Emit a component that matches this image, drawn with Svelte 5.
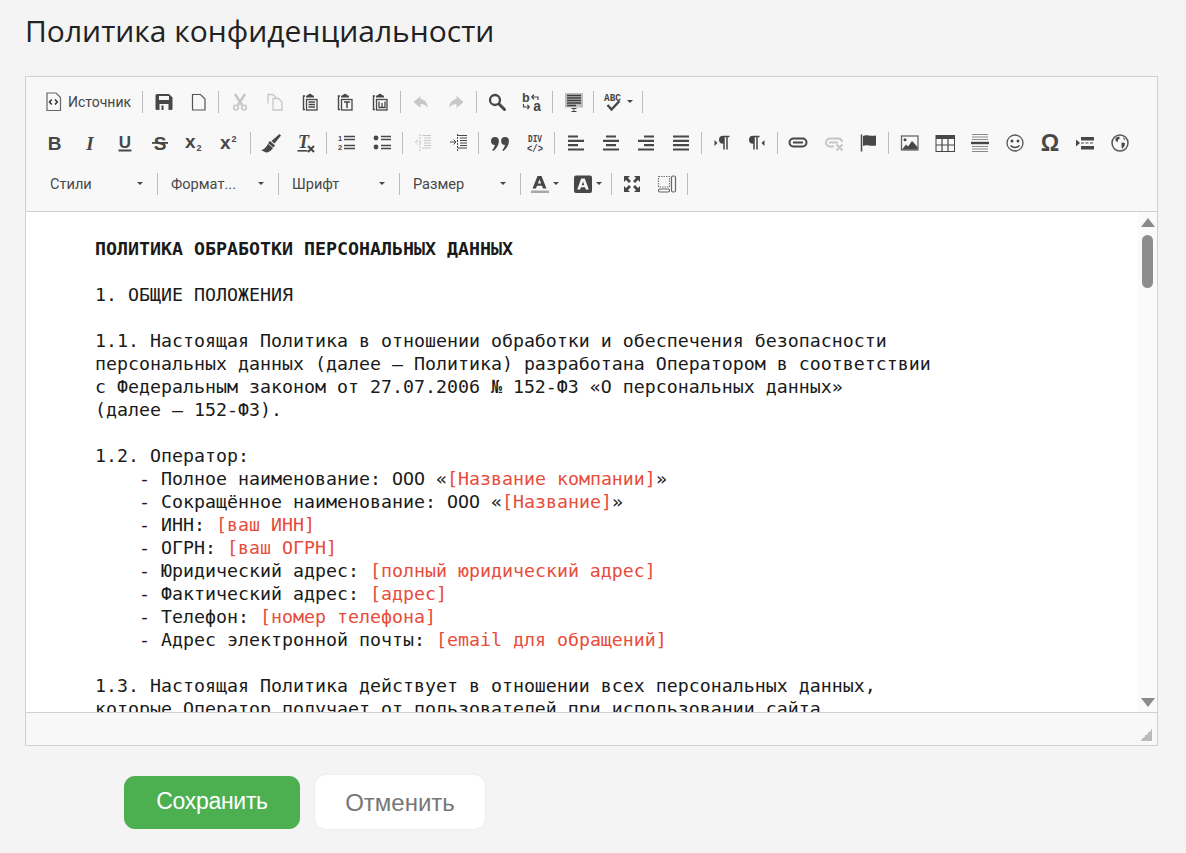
<script>
    // toolbar icons, 20x20 box. fill comes from the svg element
    const clip = '<path d="M5 4H3.500v13.500H5" fill="none" stroke="#474747" stroke-width="1.400"/><path d="M6 4.500q0-1.200 1.500-1.200h.5q0-1.500 2-1.500t2 1.500h.5q1.500 0 1.500 1.200v1H6z"/><rect x="6.500" y="7.500" width="10.500" height="10.500" fill="none" stroke="#474747" stroke-width="1.300"/>';
    const icons = {
        source: '<path d="M3 1h9l4.500 4.500V18.500H3z" fill="none" stroke="#666" stroke-width="1.200"/><path d="M7.800 7.500 5.500 10l2.300 2.500M11 7.500l2.300 2.500-2.300 2.500" fill="none" stroke="#333" stroke-width="1.500"/>',
        save: '<path d="M1.500 3.500q0-1.500 1.500-1.500h12l3.500 3.500v11q0 1.500-1.500 1.500h-14q-1.500 0-1.500-1.500z"/><rect x="5" y="4" width="10" height="4" fill="#f8f8f8"/><rect x="5.500" y="12" width="9" height="6" fill="#f8f8f8"/><rect x="7.500" y="13.500" width="2" height="4.500"/>',
        newpage: '<path d="M3.500 2.500h8l4.500 4.500v11H3.500z" fill="none" stroke="#555" stroke-width="1.200"/>',
        cut: '<path d="M5 2l7 11M15 2L8 13" fill="none" stroke="#474747" stroke-width="2.400"/><circle cx="6" cy="15.500" r="2.300" fill="none" stroke="#474747" stroke-width="1.600"/><circle cx="14" cy="15.500" r="2.300" fill="none" stroke="#474747" stroke-width="1.600"/>',
        copy: '<path d="M3 11.500V2.500h5l3 3M8 6.500h5.500l3.500 3.500v8H8z" fill="none" stroke="#474747" stroke-width="1.300"/>',
        paste: clip + '<path d="M8.500 10h6.500M8.500 12.500h6.500M8.500 15h6.500" stroke="#474747" stroke-width="1.300"/>',
        pastetext: clip + '<path d="M9 10h6M12 10v6" stroke="#474747" stroke-width="1.500"/>',
        pasteword: clip + '<path d="M9 9.500v6h6v-6M12 15v-4" fill="none" stroke="#474747" stroke-width="1.300"/>',
        undo: '<path d="M9.500 4 2.500 10l7 6v-4c3 0 5.500 1 7.500 4-.5-5-3-8.500-7.500-9z"/>',
        redo: '<path d="M10.500 4l7 6-7 6v-4c-3 0-5.500 1-7.500 4 .5-5 3-8.500 7.500-9z"/>',
        find: '<circle cx="8" cy="8" r="5" fill="none" stroke="#474747" stroke-width="2.300"/><path d="M12 12l5.500 5.500" stroke="#474747" stroke-width="3" stroke-linecap="round"/>',
        replace: '<text x="0" y="10" font-size="13" font-family="Liberation Mono" font-weight="700">b</text><text x="11" y="19" font-size="14" font-family="Liberation Mono" font-weight="700">a</text><path d="M9.500 5h6.500v3M9.500 5L12 2.800M9.500 5L12 7.200M1.500 12v3h6M7.500 15l-2.200-2.200M7.500 15l-2.200 2.200" fill="none" stroke="#474747" stroke-width="1.200"/>',
        selectall: '<rect x="1" y="1" width="18" height="14.500" fill="#bdbdbd"/><path d="M3 3.500h14M3 6h14M3 8.500h14M3 11h14M3 13.500h9" stroke="#3c3c3c" stroke-width="1.300"/><path d="M7.500 16.500h5M10 16.500v3M7.500 19.500h5" stroke="#474747" stroke-width="1"/>',
        spell: '<text x="0" y="9" font-size="11" font-family="Liberation Mono" font-weight="700" textLength="17" lengthAdjust="spacingAndGlyphs">ABC</text><path d="M3.500 13l4 4.500 8-8.500" fill="none" stroke="#474747" stroke-width="2.400"/>',
        bold: '<text x="9.500" y="16.500" text-anchor="middle" font-size="19" font-family="Liberation Sans" font-weight="700">B</text>',
        italic: '<text x="10" y="16.500" text-anchor="middle" font-size="19" font-family="Liberation Serif" font-style="italic" font-weight="700">I</text>',
        underline: '<text x="10" y="14.500" text-anchor="middle" font-size="17" font-family="Liberation Sans" font-weight="700">U</text><rect x="3.500" y="16.500" width="13" height="2"/>',
        strike: '<text x="10" y="16.500" text-anchor="middle" font-size="19" font-family="Liberation Sans" font-weight="700">S</text><rect x="2" y="9" width="16" height="1.800"/>',
        sub: '<text x="0" y="15" font-size="19" font-family="Liberation Sans" font-weight="700">x</text><text x="11.500" y="18" font-size="9" font-family="Liberation Sans" font-weight="700">2</text>',
        sup: '<text x="0" y="16" font-size="19" font-family="Liberation Sans" font-weight="700">x</text><text x="11.500" y="9" font-size="9" font-family="Liberation Sans" font-weight="700">2</text>',
        brush: '<path d="M18.500 1l1.500 1.500-6.500 8-3-2.500z"/><path d="M9 8l5 4.500-1.500 2L7 10z"/><path d="M7 10.800l5 4.200c-1.500 2.500-4.500 4.500-7 4.500L0 17c3 0 5.500-3 7-6.200z"/>',
        removeformat: '<text x="2" y="15" font-size="18" font-family="Liberation Serif" font-style="italic" font-weight="700">T</text><rect x="1.500" y="17" width="10" height="1.600"/><path d="M12 13l6 6M18 13l-6 6" stroke="#474747" stroke-width="2"/>',
        ol: '<text x="1" y="8" font-size="7.500" font-family="Liberation Sans" font-weight="700">1</text><text x="1" y="17" font-size="7.500" font-family="Liberation Sans" font-weight="700">2</text><path d="M7 3.500h11M7 6.500h11M7 12.500h11M7 15.500h11" stroke="#474747" stroke-width="1.400"/>',
        ul: '<circle cx="4" cy="5" r="2.400"/><circle cx="4" cy="14" r="2.400"/><path d="M9 3.500h10M9 6.500h10M9 12.500h10M9 15.500h10" stroke="#474747" stroke-width="1.400"/>',
        outdent: '<path d="M9 2.500h9M11 5h7M11 7.500h7M11 10h7M11 12.500h7M9 15h9" stroke="#474747" stroke-width="1.200"/><path d="M8 9H2M4.500 6.500 2 9l2.500 2.500M7 1v17" fill="none" stroke="#474747" stroke-width="1" stroke-dasharray="2 1"/>',
        indent: '<path d="M9 2.500h9M11 5h7M11 7.500h7M11 10h7M11 12.500h7M9 15h9" stroke="#474747" stroke-width="1.200"/><path d="M1 9h6M4.500 6.500 7 9l-2.500 2.500" fill="none" stroke="#474747" stroke-width="1"/><path d="M8.500 1v17" stroke="#474747" stroke-dasharray="2 1"/>',
        quote: '<path transform="translate(-1.200 -1) scale(1.120)" d="M2 8q0-3.500 3.500-3.500T9 8q0 5-5 9l-1-1q2-2 2.500-4.500Q2 11.500 2 8zM11 8q0-3.500 3.500-3.500T18 8q0 5-5 9l-1-1q2-2 2.500-4.500-3.500 0-3.500-3.500z"/>',
        div: '<text x="3" y="8.500" font-size="11" font-family="Liberation Mono" font-weight="700" textLength="14" lengthAdjust="spacingAndGlyphs">DIV</text><text x="2" y="19" font-size="11" font-family="Liberation Mono" font-weight="700" textLength="16" lengthAdjust="spacingAndGlyphs">&lt;/&gt;</text>',
        left: '<path d="M2 3.500h10M2 7.900h16M2 12.200h10M2 16.500h16" stroke="#474747" stroke-width="2.200"/>',
        center: '<path d="M5 3.500h10M2 7.900h16M5 12.200h10M2 16.500h16" stroke="#474747" stroke-width="2.200"/>',
        right: '<path d="M8 3.500h10M2 7.900h16M8 12.200h10M2 16.500h16" stroke="#474747" stroke-width="2.200"/>',
        justify: '<path d="M2 3.500h16M2 7.900h16M2 12.200h16M2 16.500h16" stroke="#474747" stroke-width="2.200"/>',
        ltr: '<path d="M2.500 7v6l3-3z"/><path d="M11 3.500a3.200 3.200 0 0 0 0 6.500V3.500h6.500M12 4v12.500M15 4v12.500" fill="#474747" stroke="#474747" stroke-width="1.500"/>',
        rtl: '<path d="M17.500 7v6l-3-3z"/><path d="M6 3.500a3.200 3.200 0 0 0 0 6.500V3.500h6.500M7 4v12.500M10 4v12.500" fill="#474747" stroke="#474747" stroke-width="1.500"/>',
        link: '<rect x="1.500" y="5.500" width="17" height="8" rx="4" fill="none" stroke="#474747" stroke-width="2"/><path d="M5 9.500h10" stroke="#474747" stroke-width="2"/>',
        unlink: '<path d="M10 13.500H6a4 4 0 0 1 0-8h8a4 4 0 0 1 4 3.500M5 9.500h9" fill="none" stroke="#474747" stroke-width="2"/><path d="M12.500 11.500l6 6M18.500 11.500l-6 6" stroke="#474747" stroke-width="2"/>',
        anchor: '<path d="M2.500 1.500v17" stroke="#474747" stroke-width="1.500"/><path d="M4 3c4-2 6 .8 13-.5v10c-7 1.300-9-1.500-13 .5z"/>',
        image: '<rect x="1.500" y="3" width="16.500" height="14" fill="none" stroke="#666" stroke-width="1.300"/><circle cx="5" cy="6.800" r="1.500"/><path d="M2 16.500l4-5 2 2 4-5.500 2 2 3.500 4v2.500z"/>',
        table: '<rect x="1" y="2.500" width="18.500" height="16" fill="none" stroke="#474747" stroke-width="1"/><rect x="1" y="2" width="18.500" height="4"/><path d="M1 12h18.500M7 6v12M13 6v12" stroke="#474747" stroke-width="1.200"/>',
        hr: '<path d="M2 1.500h16M2 4h16M2 6.500h16M2 13.500h16M2 16h16M2 18.500h16" stroke="#8a8a8a" stroke-width="1.100"/><rect x="1" y="8.800" width="18" height="2.400"/>',
        smile: '<circle cx="10" cy="10" r="8" fill="none" stroke="#555" stroke-width="1.300"/><circle cx="7" cy="8" r="1.500"/><circle cx="13" cy="8" r="1.500"/><path d="M5.500 12.500q4.500 4 9 0" fill="none" stroke="#474747" stroke-width="1.500"/>',
        omega: '<text x="10" y="17.500" text-anchor="middle" font-size="23" font-family="Liberation Sans" font-weight="700">Ω</text>',
        pagebreak: '<path d="M1 6.500v7l4-3.500z"/><rect x="6" y="4" width="13" height="3.500"/><rect x="6" y="13" width="13" height="3.500"/><path d="M6 10h13" stroke="#474747" stroke-dasharray="3 1.500"/>',
        globe: '<circle cx="10" cy="10" r="8" fill="none" stroke="#555" stroke-width="1.500"/><path d="M5.500 5l3.500-1.500 1 1.500-2 2-.5 2.500-2-2zM11.500 9.500l3.500.5-.5 3-2.500 3-.5-3zM13 4l2.500 2.500-1.500.5z"/>',
        textcolor: '<path d="M7.500 2h4l5 12.500h-3.500l-1-2.800h-5l-1 2.800h-3.500zM9.500 5.500l-1.600 4h3.200z" fill-rule="evenodd"/><rect x="1" y="16.500" width="18" height="2.500" fill="#a8a8a8"/>',
        bgcolor: '<rect x="1" y="1.500" width="18" height="17.500" rx="2"/><path d="M8.200 4.500h3.600l4 11h-3l-.7-2.200h-4.200l-.7 2.200h-3zM10 7.500l-1.300 3.800h2.600z" fill="#f8f8f8" fill-rule="evenodd"/>',
        maximize: '<path d="M2 2h6L6 4l3 3-2 2-3-3-2 2zM18 2v6l-2-2-3 3-2-2 3-3-2-2zM2 18v-6l2 2 3-3 2 2-3 3 2 2zM18 18h-6l2-2-3-3 2-2 3 3 2-2z"/>',
        blocks: '<rect x="1.500" y="2.500" width="11" height="10.500" fill="none" stroke="#777" stroke-width="1.200" stroke-dasharray="1.500 1"/><rect x="14.500" y="2" width="4" height="16" rx="1.500" fill="none" stroke="#666" stroke-width="1.200"/><rect x="1.500" y="15" width="11" height="3" rx="1.500" fill="none" stroke="#666" stroke-width="1.200"/>'
    };

    const rowOne = [
        { source: true }, 'sep',
        { i: 'save' }, { i: 'newpage' }, 'sep',
        { i: 'cut', off: true }, { i: 'copy', off: true }, { i: 'paste' }, { i: 'pastetext' }, { i: 'pasteword' }, 'sep',
        { i: 'undo', off: true }, { i: 'redo', off: true }, 'sep',
        { i: 'find' }, { i: 'replace' }, 'sep',
        { i: 'selectall' }, 'sep',
        { i: 'spell', arrow: true }, 'sep'
    ];
    const rowTwo = [
        { i: 'bold' }, { i: 'italic' }, { i: 'underline' }, { i: 'strike' }, { i: 'sub' }, { i: 'sup' }, 'sep',
        { i: 'brush' }, { i: 'removeformat' }, 'sep',
        { i: 'ol' }, { i: 'ul' }, 'sep',
        { i: 'outdent', off: true }, { i: 'indent' }, 'sep',
        { i: 'quote' }, { i: 'div' }, 'sep',
        { i: 'left' }, { i: 'center' }, { i: 'right' }, { i: 'justify' }, 'sep',
        { i: 'ltr' }, { i: 'rtl' }, 'sep',
        { i: 'link' }, { i: 'unlink', off: true }, { i: 'anchor' }, 'sep',
        { i: 'image' }, { i: 'table' }, { i: 'hr' }, { i: 'smile' }, { i: 'omega' }, { i: 'pagebreak' }, { i: 'globe' }
    ];
    const rowThree = [
        { combo: 'Стили' }, 'sep', { combo: 'Формат...' }, 'sep', { combo: 'Шрифт' }, 'sep', { combo: 'Размер' }, 'sep',
        { i: 'textcolor', arrow: true }, { i: 'bgcolor', arrow: true }, 'sep',
        { i: 'maximize' }, { i: 'blocks' }, 'sep'
    ];
    const rows = [rowOne, rowTwo, rowThree];
</script>

{#snippet icon(name)}
    <svg class="ico" viewBox="0 0 20 20" width="20" height="20" fill="#474747">{@html icons[name]}</svg>
{/snippet}

<main class="page">
    <h1>Политика конфиденциальности</h1>

    <div class="editor">
        <div class="toolbar">
            {#each rows as row}
                <div class="row">
                    {#each row as item}
                        {#if item === 'sep'}
                            <span class="sep"></span>
                        {:else if item.source}
                            <span class="btn source">{@render icon('source')}<span>Источник</span></span>
                        {:else if item.combo}
                            <span class="combo"><span class="combo-label">{item.combo}</span><span class="arrow"></span></span>
                        {:else}
                            <span class="btn" class:off={item.off} class:wide={item.arrow}>
                                {@render icon(item.i)}
                                {#if item.arrow}<span class="arrow"></span>{/if}
                            </span>
                        {/if}
                    {/each}
                </div>
            {/each}
        </div>

        <div class="content">
            <div class="doc">
                <div class="line"><b>ПОЛИТИКА ОБРАБОТКИ ПЕРСОНАЛЬНЫХ ДАННЫХ</b></div>
                <div class="line"></div>
                <div class="line">1. ОБЩИЕ ПОЛОЖЕНИЯ</div>
                <div class="line"></div>
                <div class="line">1.1. Настоящая Политика в отношении обработки и обеспечения безопасности</div>
                <div class="line">персональных данных (далее — Политика) разработана Оператором в соответствии</div>
                <div class="line">с Федеральным законом от 27.07.2006 № 152-ФЗ «О персональных данных»</div>
                <div class="line">(далее — 152-ФЗ).</div>
                <div class="line"></div>
                <div class="line">1.2. Оператор:</div>
                <div class="line sub">- Полное наименование: ООО «<em>[Название компании]</em>»</div>
                <div class="line sub">- Сокращённое наименование: ООО «<em>[Название]</em>»</div>
                <div class="line sub">- ИНН: <em>[ваш ИНН]</em></div>
                <div class="line sub">- ОГРН: <em>[ваш ОГРН]</em></div>
                <div class="line sub">- Юридический адрес: <em>[полный юридический адрес]</em></div>
                <div class="line sub">- Фактический адрес: <em>[адрес]</em></div>
                <div class="line sub">- Телефон: <em>[номер телефона]</em></div>
                <div class="line sub">- Адрес электронной почты: <em>[email для обращений]</em></div>
                <div class="line"></div>
                <div class="line">1.3. Настоящая Политика действует в отношении всех персональных данных,</div>
                <div class="line">которые Оператор получает от пользователей при использовании сайта</div>
            </div>
            <div class="scrollbar">
                <span class="tri up"></span>
                <span class="thumb"></span>
                <span class="tri down"></span>
            </div>
        </div>

        <div class="status"><span class="resizer"></span></div>
    </div>

    <div class="actions">
        <button class="save">Сохранить</button>
        <button class="cancel">Отменить</button>
    </div>
</main>

<style>
    :global(body) {
        background: #f4f4f4;
    }

    .page {
        padding: 0 28px 0 25px;
        height: 853px;
        box-sizing: border-box;
        font-family: "Liberation Sans", Arial, sans-serif;
    }

    h1 {
        margin: 0;
        height: 76px;
        padding: 11px 0 0 0;
        box-sizing: border-box;
        font-family: "Open Sans", sans-serif;
        font-size: 30px;
        line-height: 40px;
        font-weight: 400;
        color: #222;
    }

    .editor {
        border: 1px solid #d1d1d1;
        background: #f8f8f8;
    }

    .toolbar {
        padding: 4px 0 7px 11px;
        border-bottom: 1px solid #d1d1d1;
    }

    .row {
        display: flex;
        align-items: center;
        height: 41px;
    }

    .row:last-child {
        padding-left: 2.7px;
    }

    .ico {
        overflow: visible;
        flex: none;
    }

    .btn {
        width: 35.1px;
        height: 28px;
        flex: none;
        display: flex;
        align-items: center;
        justify-content: center;
    }

    .btn.off .ico {
        opacity: 0.28;
    }

    .btn.wide {
        width: 42.5px;
        padding-left: 6.7px;
        box-sizing: border-box;
        justify-content: flex-start;
        gap: 3px;
    }

    .source {
        width: 103px;
        padding-left: 7px;
        box-sizing: border-box;
        justify-content: flex-start;
        gap: 4px;
        font-family: Roboto, sans-serif;
        font-size: 14px;
        color: #444;
    }

    .sep {
        flex: none;
        width: 6px;
        height: 22px;
    }

    .sep::after {
        content: "";
        display: block;
        width: 1px;
        height: 22px;
        margin-left: 2px;
        background: #bcbcbc;
    }

    .combo {
        flex: none;
        width: 115px;
        display: flex;
        align-items: center;
        justify-content: space-between;
        padding: 0 11.7px 0 10.3px;
        box-sizing: border-box;
        font-family: Roboto, sans-serif;
        font-size: 14.6px;
        color: #484848;
    }

    .arrow {
        width: 0;
        height: 0;
        border-left: 3px solid transparent;
        border-right: 3px solid transparent;
        border-top: 3px solid #474747;
    }

    .content {
        display: flex;
        height: 500px;
        background: #fff;
        overflow: hidden;
    }

    .doc {
        flex: 1;
        padding: 25px 0 0 69px;
        font-family: "DejaVu Sans Mono", monospace;
        font-size: 18.27px;
        line-height: 23px;
        color: #1a1a1a;
    }

    .line {
        height: 23px;
        white-space: pre;
    }

    .line.sub {
        padding-left: 44px;
    }

    .doc em {
        font-style: normal;
        color: #e74c3c;
    }

    .scrollbar {
        width: 19px;
        flex: none;
        background: #fafafa;
        display: flex;
        flex-direction: column;
        align-items: center;
        padding: 6px 0 5px;
        box-sizing: border-box;
    }

    .tri {
        width: 0;
        height: 0;
        border-left: 7px solid transparent;
        border-right: 7px solid transparent;
    }

    .tri.up {
        border-bottom: 9px solid #8a8a8a;
    }

    .tri.down {
        margin-top: auto;
        border-top: 9px solid #8a8a8a;
    }

    .thumb {
        width: 11px;
        height: 53px;
        margin-top: 8px;
        border-radius: 6px;
        background: #8d8d8d;
    }

    .status {
        height: 33px;
        box-sizing: border-box;
        border-top: 1px solid #d1d1d1;
        display: flex;
        justify-content: flex-end;
        align-items: flex-end;
        padding: 0 5px 4px 0;
    }

    .resizer {
        width: 12px;
        height: 12px;
        background: linear-gradient(135deg, transparent 50%, #bbb 50%);
    }

    .actions {
        display: flex;
        align-items: center;
        gap: 14px;
        margin-top: 28px;
        padding-left: 99px;
    }

    button {
        font-family: "Liberation Sans", Arial, sans-serif;
        box-sizing: border-box;
        cursor: pointer;
    }

    .save {
        width: 176px;
        height: 53px;
        padding-bottom: 3px;
        border: none;
        border-radius: 11px;
        background: #4caf50;
        color: #fff;
        font-size: 23px;
        letter-spacing: -0.3px;
    }

    .cancel {
        width: 172px;
        height: 56px;
        padding-top: 2px;
        border: 1px solid #eee;
        border-radius: 12px;
        background: #fff;
        color: #777;
        font-size: 24px;
    }
</style>
